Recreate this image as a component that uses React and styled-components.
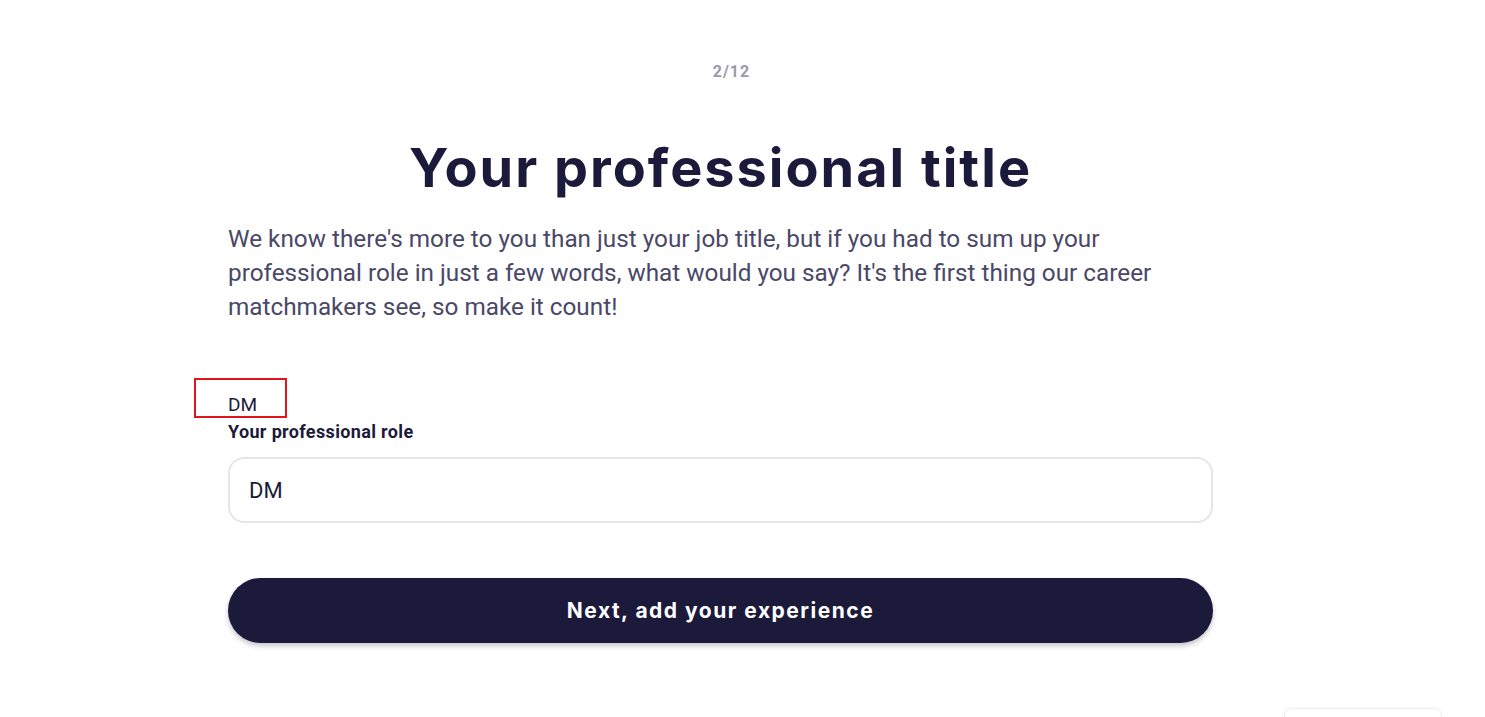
import styled, { createGlobalStyle } from "styled-components";

const GlobalStyle = createGlobalStyle`
  html, body {
    margin: 0;
    padding: 0;
    background: #ffffff;
    overflow: hidden;
  }
  body {
    font-family: Roboto, "Liberation Sans", sans-serif;
  }
`;

const Page = styled.main`
  width: 1441px;
  min-height: 717px;
  padding-top: 61px;
  box-sizing: border-box;
`;

const Column = styled.div`
  width: 985px;
  margin-left: 228px;
  display: flex;
  flex-direction: column;
`;

const Step = styled.div`
  text-align: center;
  font-size: 16px;
  line-height: 22px;
  font-weight: 700;
  letter-spacing: 1px;
  color: #9a98ae;
  padding-left: 22px;
`;

const Title = styled.h1`
  margin: 50px 0 0;
  text-align: center;
  font-family: Inter, "Open Sans", sans-serif;
  font-size: 54px;
  line-height: 70px;
  font-weight: 700;
  letter-spacing: 2px;
  color: #1c1a3b;
`;

const Description = styled.p`
  margin: 19px 0 0;
  max-width: 950px;
  font-size: 24.3px;
  line-height: 34px;
  color: #4a4867;
`;

const Field = styled.div`
  margin-top: 68px;
  display: flex;
  flex-direction: column;
`;

const Preview = styled.div`
  position: relative;
  font-size: 19px;
  line-height: 24px;
  color: #1c1a3b;
  top: 1px;
`;

const Highlight = styled.span`
  position: absolute;
  left: -34px;
  top: -15px;
  width: 93px;
  height: 40px;
  border: 2px solid #e0161b;
  box-sizing: border-box;
`;

const Label = styled.label`
  margin-top: 6px;
  font-size: 18px;
  line-height: 20px;
  font-weight: 700;
  letter-spacing: 0.35px;
  color: #1c1a3b;
`;

const Input = styled.input`
  margin-top: 15px;
  height: 66px;
  box-sizing: border-box;
  border: 2px solid #e6e5ec;
  border-radius: 16px;
  padding: 0 19px;
  font-family: Roboto, "Liberation Sans", sans-serif;
  font-size: 22px;
  color: #1c1a3b;
  outline: none;
  background: #fff;
`;

const NextButton = styled.button`
  margin-top: 55px;
  height: 65px;
  border: none;
  border-radius: 33px;
  background: #1c1a3b;
  color: #ffffff;
  font-family: Inter, "Open Sans", sans-serif;
  font-size: 21px;
  font-weight: 700;
  letter-spacing: 1.5px;
  box-shadow: 0 3px 5px rgba(28, 26, 59, 0.25);
  cursor: pointer;
`;

const Widget = styled.div`
  position: fixed;
  left: 1284px;
  top: 708px;
  width: 156px;
  height: 60px;
  border: 1px solid #efeff2;
  border-radius: 8px;
  background: #fff;
  box-shadow: 0 0 4px rgba(0, 0, 0, 0.06);
`;

export default function App() {
  return (
    <>
      <GlobalStyle />
      <Page>
        <Column>
          <Step>2/12</Step>
          <Title>Your professional title</Title>
          <Description>
            We know there's more to you than just your job title, but if you had to sum up your
            professional role in just a few words, what would you say? It's the first thing our
            career matchmakers see, so make it count!
          </Description>
          <Field>
            <Preview>
              <Highlight />
              DM
            </Preview>
            <Label htmlFor="role">Your professional role</Label>
            <Input id="role" defaultValue="DM" />
          </Field>
          <NextButton>Next, add your experience</NextButton>
        </Column>
      </Page>
      <Widget />
    </>
  );
}
